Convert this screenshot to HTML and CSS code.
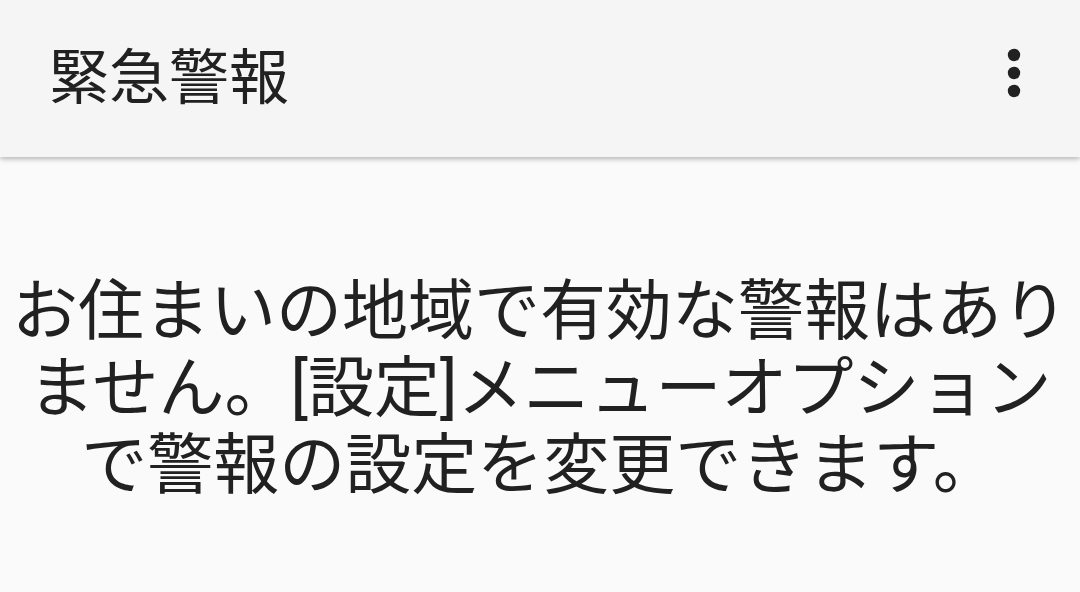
FILE: index.html
```html
<!DOCTYPE html>
<html lang="ja">
<head>
<meta charset="utf-8">
<link rel="stylesheet" href="styles.css">
</head>
<body>
<header class="appbar">
  <h1 class="title">緊急警報</h1>
  <button class="menu" aria-label="その他のオプション">
    <svg width="14" height="50" viewBox="0 0 14 50"><circle cx="7" cy="7" r="6.2"/><circle cx="7" cy="25" r="6.2"/><circle cx="7" cy="43" r="6.2"/></svg>
  </button>
</header>
<main class="content">
  <p class="message">お住まいの地域で有効な警報はありません。[設定]メニューオプションで警報の設定を変更できます。</p>
</main>
</body>
</html>
```
FILE: styles.css
```css
html, body {
  margin: 0;
  padding: 0;
  height: 100%;
}
body {
  background: #fafafa;
  font-family: Roboto, "Noto Sans CJK JP", sans-serif;
  color: #212121;
  overflow: hidden;
}
.appbar {
  height: 157px;
  box-sizing: border-box;
  background: #f5f5f5;
  display: flex;
  align-items: center;
  justify-content: space-between;
  padding: 0 59px 12px 49px;
  box-shadow: 0 2px 5px rgba(0,0,0,0.28);
  position: relative;
  z-index: 1;
}
.title {
  margin: 0;
  font-size: 60px;
  font-weight: 400;
  color: #212121;
}
.menu {
  border: 0;
  background: none;
  padding: 0;
  display: flex;
  fill: #212121;
}
.content {
  padding: 116px 8px 0;
}
.message {
  margin: 0;
  text-align: center;
  font-size: 66px;
  line-height: 77px;
}
```
